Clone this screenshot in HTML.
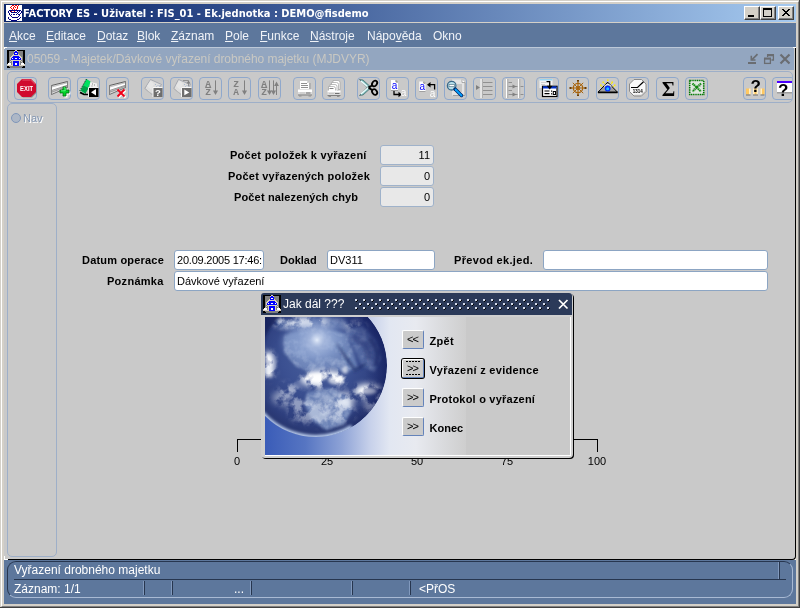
<!DOCTYPE html>
<html><head><meta charset="utf-8"><title>FACTORY ES</title>
<style>
html,body{margin:0;padding:0;}
body{will-change:transform;width:800px;height:608px;overflow:hidden;background:#d4d0c8;position:relative;font-family:"Liberation Sans",sans-serif;font-size:11px;color:#000;}
.abs{position:absolute;}
#frame{position:absolute;left:0;top:0;width:800px;height:608px;box-sizing:border-box;background:#d4d0c8;}
#fr1{position:absolute;left:0;top:0;width:799px;height:607px;border-right:1px solid #404040;border-bottom:1px solid #404040;}
#fr2{position:absolute;left:1px;top:1px;width:798px;height:606px;border-left:1px solid #fff;border-top:1px solid #fff;border-right:1px solid #808080;border-bottom:1px solid #808080;box-sizing:border-box;}
#title{position:absolute;left:4px;top:4px;width:792px;height:18px;background:linear-gradient(to right,#0a246a 0%,#0a246a 5%,#a6caf0 100%);}
#title .txt{position:absolute;left:19px;top:1.5px;line-height:16px;color:#fff;font-weight:bold;font-size:11px;font-family:"DejaVu Sans Condensed","Liberation Sans",sans-serif;white-space:nowrap;}
.cbtn{position:absolute;top:2px;width:16px;height:14px;background:#d4d0c8;box-sizing:border-box;border:1px solid;border-color:#fff #404040 #404040 #fff;box-shadow:inset -1px -1px 0 #808080;}
#menubar{position:absolute;left:4px;top:23px;width:792px;height:24px;background:#5d779c;}
#menubar span{position:absolute;top:6px;font-size:12px;line-height:14px;color:#f0f3f8;white-space:nowrap;}
#menubar u{text-decoration:underline;}
#mdi{position:absolute;left:4px;top:47px;width:792px;height:513px;box-sizing:border-box;background:#c9c9c9;border-right:1px solid #000;border-bottom:1px solid #000;border-bottom-right-radius:4px;border-top:1px solid #bcc8d8;}
#mdititle{position:absolute;left:4px;top:48px;width:790px;height:22px;background:#93a6c0;}
#mdititle .txt{position:absolute;left:23px;top:4px;letter-spacing:-.04px;font-size:12px;line-height:14px;color:#c9c8c2;white-space:nowrap;}
#status{position:absolute;left:4px;top:560px;width:792px;height:44px;background:#5d779c;}
.lbl{position:absolute;font-weight:bold;font-size:11px;line-height:13px;white-space:nowrap;}
.fld{position:absolute;box-sizing:border-box;border:1px solid #8ca5c3;border-radius:3px;background:#fff;font-size:11px;line-height:13px;white-space:nowrap;overflow:hidden;padding:3px 2px 0 2px;height:20px;}
.fld.ro{border-color:#9fb2ca;background:#e8e8e8;text-align:right;padding-right:3px;}
.tb{position:absolute;top:5px;}

#toolbar{position:absolute;left:7px;top:71px;width:786px;height:32px;box-sizing:border-box;border:1px solid #9eafc8;border-radius:5px;overflow:hidden;}
#toolbar .tb{top:5px;}
#navp{position:absolute;left:7px;top:103px;width:50px;height:454px;box-sizing:border-box;border:1px solid #9eafc8;border-radius:5px;}
#radio{position:absolute;left:3px;top:9px;width:10px;height:10px;box-sizing:border-box;border:1px solid #7f96ba;border-radius:50%;background:#adb7c6;}
#navt{position:absolute;left:15px;top:8px;font-size:11px;line-height:13px;color:#8397b4;text-shadow:1px 1px 0 #fff;}
.sl{position:absolute;top:455px;width:40px;text-align:center;font-size:11px;line-height:13px;}
#dlg{position:absolute;left:261px;top:293px;width:312px;height:165px;background:#cfcfcf;border-radius:4px 4px 4px 4px;box-shadow:1px 1px 0 #000;}
#dlgt{position:absolute;left:0;top:0;width:311px;height:22px;background:#2b3a59;border-radius:3px 3px 0 0;}
#dlgt .txt{position:absolute;left:22px;top:4px;font-size:12px;line-height:14px;color:#fff;white-space:nowrap;}
#dlgb{position:absolute;left:0;top:23px;width:312px;height:142px;}#dlgin{position:absolute;left:4px;top:1px;width:305px;height:138px;background:#c9c9c9;border-right:1px solid #fff;border-bottom:1px solid #fff;}

.dbtn{position:absolute;width:22px;height:19px;box-sizing:border-box;background:#cbcbcb;border:1px solid;border-color:#fff #6483ba #6483ba #fff;border-radius:2px;font-size:11px;line-height:13px;text-align:center;padding-top:2px;letter-spacing:-1px;text-indent:-1px;}
.dbtn.foc{box-shadow:0 0 0 1px #000;}.dbtn.foc i{position:absolute;left:3px;top:1px;width:14px;height:14px;box-sizing:border-box;background:repeating-linear-gradient(to right,#000 0,#000 2px,transparent 2px,transparent 3px) 0 0/14px 1px no-repeat,repeating-linear-gradient(to right,#000 0,#000 2px,transparent 2px,transparent 3px) 0 13px/14px 1px no-repeat;}
#stbox{position:absolute;left:3px;top:1px;width:786px;height:37px;box-sizing:border-box;border:1px solid;border-color:#27364f #a9bad4 #a9bad4 #27364f;border-radius:9px;}.vs{position:absolute;top:21px;width:1px;height:14px;background:#27364f;box-shadow:-1px 0 0 #8199bd;}
.st{position:absolute;font-size:12px;line-height:14px;color:#fff;white-space:nowrap;}
</style></head><body>
<div id="frame"><div id="fr1"></div><div id="fr2"></div></div>
<div id="title"><span class="txt">FACTORY ES - Uživatel : FIS_01 - Ek.jednotka : DEMO@fisdemo</span>
<div class="cbtn" style="left:740px"><svg width="16" height="14" style="position:absolute;left:-1px;top:-1px" shape-rendering="crispEdges"><rect x="4" y="9" width="6" height="2" fill="#000"/></svg></div>
<div class="cbtn" style="left:756px"><svg width="16" height="14" style="position:absolute;left:-1px;top:-1px" shape-rendering="crispEdges"><path d="M3 2h9v9h-9z M4 4v6h7v-6z" fill="#000" fill-rule="evenodd"/></svg></div>
<div class="cbtn" style="left:774px"><svg width="16" height="14" style="position:absolute;left:-1px;top:-1px" shape-rendering="crispEdges"><path d="M4 3h2v1h1v1h2v-1h1v-1h2v1h-1v1h-1v1h-1v1h1v1h1v1h1v1h-2v-1h-1v-1h-2v1h-1v1h-2v-1h1v-1h1v-1h1v-1h-1v-1h-1v-1h-1z" fill="#000"/></svg></div>
<svg id="appicon" width="16" height="16" style="position:absolute;left:2px;top:1px" shape-rendering="crispEdges"><rect width="16" height="16" fill="#fff"/>
<g fill="#ff0000"><rect x="6" y="0" width="2" height="1"/><rect x="9" y="0" width="2" height="1"/><rect x="12" y="0" width="1" height="1"/><rect x="5" y="1" width="1" height="1"/><rect x="8" y="1" width="1" height="1"/><rect x="11" y="1" width="1" height="2"/><rect x="4" y="2" width="1" height="1"/><rect x="7" y="2" width="1" height="2"/><rect x="9" y="2" width="1" height="1"/><rect x="5" y="3" width="1" height="1"/><rect x="11" y="3" width="1" height="1"/><rect x="6" y="4" width="1" height="1"/><rect x="8" y="4" width="1" height="1"/><rect x="10" y="4" width="1" height="1"/><rect x="5" y="6" width="1" height="1"/><rect x="8" y="6" width="1" height="1"/></g>
<g fill="#000080"><rect x="3" y="5" width="9" height="1"/><rect x="12" y="5" width="3" height="1"/><rect x="2" y="6" width="1" height="2"/><rect x="4" y="6" width="1" height="1"/><rect x="5" y="7" width="6" height="1"/><rect x="11" y="6" width="1" height="1"/><rect x="3" y="8" width="1" height="2"/><rect x="4" y="10" width="1" height="1"/><rect x="5" y="11" width="1" height="1"/><rect x="6" y="12" width="6" height="1"/><rect x="5" y="9" width="1" height="1"/><rect x="7" y="9" width="2" height="1"/><rect x="10" y="9" width="1" height="1"/><rect x="12" y="11" width="1" height="1"/><rect x="13" y="10" width="1" height="1"/><rect x="11" y="8" width="1" height="1"/><rect x="12" y="7" width="1" height="1"/><rect x="13" y="6" width="1" height="1"/><rect x="15" y="6" width="1" height="2"/><rect x="14" y="8" width="1" height="1"/><rect x="13" y="9" width="1" height="1"/><rect x="12" y="9" width="1" height="1"/><rect x="14" y="12" width="1" height="1"/><rect x="13" y="13" width="1" height="1"/><rect x="2" y="12" width="1" height="2"/><rect x="3" y="14" width="2" height="1"/><rect x="11" y="14" width="2" height="1"/><rect x="5" y="15" width="6" height="1"/></g></svg>
</div>
<div id="menubar">
<span style="left:5px"><u>A</u>kce</span><span style="left:42px"><u>E</u>ditace</span><span style="left:93px"><u>D</u>otaz</span><span style="left:133px"><u>B</u>lok</span><span style="left:167px"><u>Z</u>áznam</span><span style="left:221px"><u>P</u>ole</span><span style="left:256px"><u>F</u>unkce</span><span style="left:306px"><u>N</u>ástroje</span><span style="left:363px">Nápo<u>v</u>ěda</span><span style="left:429px">Okno</span>
</div>
<div id="mdi"></div>
<div id="mdititle"><svg class="pag" style="position:absolute;left:3px;top:2px" width="18" height="18" viewBox="0 0 18 18" shape-rendering="crispEdges"><rect width="18" height="18" fill="#000"/><rect x="2" y="1" width="14" height="16" fill="#808080"/>
<path d="M8 0h2v1h1v3h1v1h1v1h1v1h1v3h-1v1h1v1h1v1h1v1h1v2h-18v-2h1v-1h1v-1h1v-1h1v-1h-1v-3h1v-1h1v-1h1v-1h1v-3h1z" fill="#d8d0c0"/>
<path d="M8 1h2v1h1v3h-4v-3h1z M6 6h6v1h1v1h1v2h-10v-2h1v-1h1z M6 11h6v5h-6z" fill="#0000ff"/>
<rect x="8" y="3" width="2" height="1" fill="#fff"/><rect x="5" y="8" width="1" height="1" fill="#fff"/><rect x="8" y="8" width="2" height="1" fill="#fff"/><rect x="12" y="8" width="1" height="1" fill="#fff"/><rect x="8" y="13" width="2" height="2" fill="#fff"/>
<rect x="1" y="13" width="3" height="2" fill="#fff"/><rect x="14" y="13" width="3" height="2" fill="#fff"/><rect x="2" y="12" width="1" height="1" fill="#c0c0c0"/><rect x="15" y="12" width="1" height="1" fill="#c0c0c0"/>
<rect x="4" y="11" width="1" height="2" fill="#808080"/><rect x="3" y="12" width="1" height="1" fill="#808080"/><rect x="13" y="11" width="1" height="2" fill="#808080"/><rect x="14" y="12" width="1" height="1" fill="#808080"/><rect x="4" y="13" width="1" height="2" fill="#808080"/><rect x="13" y="13" width="1" height="2" fill="#808080"/><rect x="3" y="17" width="12" height="1" fill="#808080"/></svg><svg style="position:absolute;left:742px;top:5px" width="46" height="13" viewBox="0 0 46 13"><g stroke="#6a6d72" fill="none" stroke-width="2"><path d="M2 10h8"/><path d="M11.500 1.200 L5.800 6.900" stroke-width="1.700"/><path d="M5.300 2.800 V7 H9.500" stroke-width="1.600"/>
<path d="M21.600 4 V2.500 H27.400 V7 H25.500" stroke-width="1.300"/><path d="M21 2 H28" stroke-width="2"/><rect x="18.600" y="5.700" width="5.800" height="4.700" stroke-width="1.300"/><path d="M18 5.500 H25" stroke-width="2"/>
<path d="M34.500 1.500 L43.500 10.500 M43.500 1.500 L34.500 10.500" stroke-width="2.200"/></g></svg><span class="txt">05059 - Majetek/Dávkové vyřazení drobného majetku (MJDVYR)</span></div>

<div class="abs" style="left:4px;top:47px;width:3px;height:1px;background:#fff"></div><div class="abs" style="left:4px;top:47px;width:1px;height:2px;background:#fff"></div>
<div class="abs" style="left:4px;top:556px;width:1px;height:4px;background:#fff"></div><div class="abs" style="left:4px;top:559px;width:4px;height:1px;background:#fff"></div>
<div class="abs" style="left:793px;top:47px;width:3px;height:1px;background:#fff"></div><div class="abs" style="left:795px;top:559px;width:1px;height:1px;background:#fff"></div>
<div id="toolbar">
<svg class="tb" style="left:6px" width="23" height="23" viewBox="0 0 23 23"><rect x=".5" y=".5" width="22" height="22" rx="3.500" fill="none" stroke="#8fa8cc"/><path d="M8 2.5h9l4.5 4.5v8l-4.5 4.5h-9l-4.5-4.5v-8z" fill="#909090" transform="translate(1,1)"/>
<path d="M8 2h9l5 5v8l-5 5h-9l-5-5v-8z" fill="#d00a2e"/>
<path d="M8.3 3h8.4l4.3 4.3" stroke="#e8506a" fill="none"/>
<text x="12.6" y="13.6" font-family="Liberation Sans,sans-serif" font-weight="bold" font-size="7.2" fill="#fff" text-anchor="middle" textLength="13" lengthAdjust="spacingAndGlyphs">EXIT</text></svg>
<svg class="tb" style="left:40px" width="23" height="23" viewBox="0 0 23 23"><rect x=".5" y=".5" width="22" height="22" rx="3.500" fill="none" stroke="#8fa8cc"/><g>
<path d="M3.5 8.5 L19.5 4.5 V10.5 L3.5 17.5 Z" fill="#e4e4e4"/>
<path d="M4 10.5 L19 6.2 V8.2 L4 13 Z" fill="#fff"/>
<path d="M4 14.2 L19 8.8 V10 L4 15.8 Z" fill="#a0a0a0"/><path d="M4 9.8 L19 5.8" stroke="#c0c0c0" fill="none"/><path d="M4 13.4 L19 8.4" stroke="#808080" stroke-width=".8" fill="none"/>
<path d="M3.5 8.5 L19.5 4.5" stroke="#606060" fill="none"/>
<path d="M3.5 17.5 L19.5 10.5" stroke="#707070" fill="none"/>
<path d="M3.5 8 V18 M19.5 4 V11" stroke="#808080" fill="none"/>
</g><path d="M15.5 10.5h3v3h3v3h-3v3h-3v-3h-3v-3h3z" fill="#fff" transform="translate(1,1)"/>
<path d="M15 10h3v3h3v3h-3v3h-3v-3h-3v-3h3z" fill="#00d428" stroke="#006a10" stroke-width="0.8"/>
<path d="M15.6 10.8h1.6v3h-4.2" stroke="#70ff90" stroke-width="0.8" fill="none"/></svg>
<svg class="tb" style="left:69px" width="23" height="23" viewBox="0 0 23 23"><rect x=".5" y=".5" width="22" height="22" rx="3.500" fill="none" stroke="#8fa8cc"/><path d="M13 5 L20 6.5 V11 H13 Z" fill="#f0f0f0"/>
<path d="M15 7h1M17 8h1M14.5 9h1" stroke="#808080"/>
<path d="M9.5 2 L13.5 4.5 L11.500 11 L8 16.500 L3.500 13.500 Z" fill="#00e060"/>
<path d="M6.500 8.500 L11.500 11 L8.500 16.500 L4 13.500 Z" fill="#00a048"/>
<path d="M9.5 2 L3 13.5 L6 17 H9" stroke="#004020" stroke-width="1" fill="none" stroke-dasharray="1.5 1"/>
<path d="M3 15.5 L7 17.5 H11" stroke="#000" stroke-width="1.6" fill="none"/>
<rect x="11.5" y="10.5" width="10" height="9.5" fill="#000"/>
<path d="M11.5 20 V10.5 H21.5" stroke="#f4f4f4" fill="none"/>
<path d="M14 15.2 L19 12 V18.4 Z" fill="#fff"/></svg>
<svg class="tb" style="left:98px" width="23" height="23" viewBox="0 0 23 23"><rect x=".5" y=".5" width="22" height="22" rx="3.500" fill="none" stroke="#8fa8cc"/><g>
<path d="M3.5 8.5 L19.5 4.5 V10.5 L3.5 17.5 Z" fill="#e4e4e4"/>
<path d="M4 10.5 L19 6.2 V8.2 L4 13 Z" fill="#fff"/>
<path d="M4 14.2 L19 8.8 V10 L4 15.8 Z" fill="#a0a0a0"/><path d="M4 9.8 L19 5.8" stroke="#c0c0c0" fill="none"/><path d="M4 13.4 L19 8.4" stroke="#808080" stroke-width=".8" fill="none"/>
<path d="M3.5 8.5 L19.5 4.5" stroke="#606060" fill="none"/>
<path d="M3.5 17.5 L19.5 10.5" stroke="#707070" fill="none"/>
<path d="M3.5 8 V18 M19.5 4 V11" stroke="#808080" fill="none"/>
</g><path d="M11.5 12.5 L18.5 19.5 M18.5 12.5 L11.5 19.5" stroke="#fff" stroke-width="2" transform="translate(1,1)"/><path d="M11.5 12.5 L18.5 19.5 M18.5 12.5 L11.5 19.5" stroke="#f00018" stroke-width="1.900"/></svg>
<svg class="tb" style="left:133px" width="23" height="23" viewBox="0 0 23 23"><rect x=".5" y=".5" width="22" height="22" rx="3.500" fill="none" stroke="#8fa8cc"/><path d="M9.5 2.5 L20.5 7.5 L17 12 L11 17.5 L3.8 11.5 Z" fill="#dedede" stroke="#9a9ea8" stroke-width=".8"/>
<path d="M9.5 3.5 L6 9 L10 12.5 L13 7 Z" fill="#e6e6e6"/>
<path d="M14 7.5h1M16.5 8.5h1M15 9.8h1M18 9h1" stroke="#a8b8d0"/>
<path d="M3.8 11.5 L11 17.5" stroke="#b8b8b8" fill="none"/><rect x="12" y="10.5" width="9.5" height="9.5" fill="#6e6e6e"/><path d="M12 20 V10.5 H21.5" stroke="#f8f8f8" fill="none"/>
<text x="17" y="19" font-family="Liberation Sans,sans-serif" font-weight="bold" font-size="9.5" fill="#fff" text-anchor="middle">?</text></svg>
<svg class="tb" style="left:162px" width="23" height="23" viewBox="0 0 23 23"><rect x=".5" y=".5" width="22" height="22" rx="3.500" fill="none" stroke="#8fa8cc"/><path d="M8.5 2.5 L20.5 7.5 L17 12 L11 17.5 L3.8 11.5 Z" fill="#dedede" stroke="#9a9ea8" stroke-width=".8"/>
<path d="M9.5 3.5 L6 9 L10 12.5 L13 7 Z" fill="#e6e6e6"/>
<path d="M14 7.5h1M16.5 8.5h1M15 9.8h1M18 9h1" stroke="#a8b8d0"/>
<path d="M3.8 11.5 L11 17.5" stroke="#b8b8b8" fill="none"/><path d="M13 3.5 H18.5 V9" stroke="#909090" fill="none"/><path d="M16.5 6.5h4l-2 -3z" fill="#808080"/>
<rect x="11.5" y="10.5" width="10" height="9.5" fill="#6e6e6e"/><path d="M11.5 20 V10.5 H21.5" stroke="#f8f8f8" fill="none"/>
<path d="M14.3 12.5 L19.3 15.4 L14.3 18.3 Z" fill="#fff"/></svg>
<svg class="tb" style="left:191px" width="23" height="23" viewBox="0 0 23 23"><rect x=".5" y=".5" width="22" height="22" rx="3.500" fill="none" stroke="#8fa8cc"/><text x="9.2" y="9.8" font-family="Liberation Mono,monospace" font-weight="bold" font-size="9.5" fill="#808080" text-anchor="middle">A</text><text x="9.2" y="17.9" font-family="Liberation Mono,monospace" font-weight="bold" font-size="9.5" fill="#808080" text-anchor="middle">Z</text><path d="M6.2 10.5h6" stroke="#808080"/><path d="M16.5 3.4 V17" stroke="#808080" fill="none"/><path d="M14.0 13.6 h5 l-2.5 4.4z" fill="#808080"/></svg>
<svg class="tb" style="left:220px" width="23" height="23" viewBox="0 0 23 23"><rect x=".5" y=".5" width="22" height="22" rx="3.500" fill="none" stroke="#8fa8cc"/><text x="8.2" y="9.8" font-family="Liberation Mono,monospace" font-weight="bold" font-size="9.5" fill="#808080" text-anchor="middle">Z</text><text x="8.2" y="17.9" font-family="Liberation Mono,monospace" font-weight="bold" font-size="9.5" fill="#808080" text-anchor="middle">A</text><path d="M16.5 3.4 V17" stroke="#808080" fill="none"/><path d="M14.0 13.6 h5 l-2.5 4.4z" fill="#808080"/></svg>
<svg class="tb" style="left:250px" width="23" height="23" viewBox="0 0 23 23"><rect x=".5" y=".5" width="22" height="22" rx="3.500" fill="none" stroke="#8fa8cc"/><text x="6.2" y="9.8" font-family="Liberation Mono,monospace" font-weight="bold" font-size="9.5" fill="#808080" text-anchor="middle">A</text><text x="6.2" y="17.9" font-family="Liberation Mono,monospace" font-weight="bold" font-size="9.5" fill="#808080" text-anchor="middle">Z</text><path d="M3.2 10.5h6" stroke="#808080"/><path d="M11.5 3.4 V17" stroke="#808080" fill="none"/><path d="M9.0 13.6 h5 l-2.5 4.4z" fill="#808080"/><path d="M15.5 3.4 V17" stroke="#808080" fill="none"/><path d="M13.0 13.6 h5 l-2.5 4.4z" fill="#808080"/><path d="M18.5 6 V18" stroke="#808080" fill="none"/><path d="M16.1 9 h4.8 l-2.4 -4.4z" fill="#808080"/></svg>
<svg class="tb" style="left:285px" width="23" height="23" viewBox="0 0 23 23"><rect x=".5" y=".5" width="22" height="22" rx="3.500" fill="none" stroke="#8fa8cc"/><path d="M7 4h7l2 2v6h-9z" fill="#fff"/><path d="M14 4v2h2" fill="#d0d0d0"/><path d="M17 6v6" stroke="#909090" fill="none" stroke-width=".8"/>
<path d="M8 6.5h6M8 8.5h7M8 10.5h7" stroke="#909090"/>
<rect x="5" y="12.5" width="14" height="2.5" fill="#fff"/><rect x="5" y="15" width="14" height="2.5" fill="#dcdcdc"/>
<path d="M13 16h4.5" stroke="#707070"/><path d="M7 16h5" stroke="#c4c4c4"/>
<rect x="5" y="17.5" width="14" height="1" fill="#808080"/><rect x="6" y="18.5" width="2.5" height="1" fill="#909090"/><rect x="15.5" y="18.5" width="2.5" height="1" fill="#909090"/></svg>
<svg class="tb" style="left:314px" width="23" height="23" viewBox="0 0 23 23"><rect x=".5" y=".5" width="22" height="22" rx="3.500" fill="none" stroke="#8fa8cc"/><g fill="#fff" stroke="#a0a0a0" stroke-width=".7"><path d="M11 3.5h5q2 0 2 2v7h-7z"/><path d="M9.5 5.5h5q2 0 2 2v6h-7z"/><path d="M8 7.5h5q2 0 2 2v5h-7z"/><path d="M6.500 9.500h5q2 0 2 2v3h-7z"/></g>
<path d="M7.500 11.500h4" stroke="#808080"/>
<rect x="5.500" y="13.500" width="13" height="2" fill="#fff"/><rect x="5.500" y="15.500" width="13" height="2.500" fill="#dcdcdc"/>
<path d="M13 16.500h4.500" stroke="#707070"/><path d="M7 16.500h5" stroke="#c4c4c4"/>
<rect x="5.500" y="18" width="13" height="1" fill="#808080"/><rect x="6.500" y="19" width="2.500" height="1" fill="#909090"/><rect x="15" y="19" width="2.500" height="1" fill="#909090"/></svg>
<svg class="tb" style="left:349px" width="23" height="23" viewBox="0 0 23 23"><rect x=".5" y=".5" width="22" height="22" rx="3.500" fill="none" stroke="#8fa8cc"/><path d="M2.500 2.500 L6 3 L13.500 9.800 L11.500 12 Z" fill="#7ab8b8" stroke="#305858" stroke-width=".6"/><path d="M4 4 L11.500 10.600" stroke="#f0ffff" stroke-width="1.300"/>
<path d="M2.500 18.500 L6 18 L13.500 11.200 L11.500 9 Z" fill="#7ab8b8" stroke="#305858" stroke-width=".6"/><path d="M4 17 L11.500 10.400" stroke="#f0ffff" stroke-width="1.300"/>
<path d="M11.500 10.500 L15 8.500 M11.500 10.500 L15 13" stroke="#000" stroke-width="2"/>
<ellipse cx="17.600" cy="6.500" rx="2.300" ry="3" fill="none" stroke="#000" stroke-width="1.800" transform="rotate(35 17.600 6.500)"/>
<ellipse cx="17.600" cy="15" rx="2.300" ry="3" fill="none" stroke="#000" stroke-width="1.800" transform="rotate(-35 17.600 15)"/></svg>
<svg class="tb" style="left:378px" width="23" height="23" viewBox="0 0 23 23"><rect x=".5" y=".5" width="22" height="22" rx="3.500" fill="none" stroke="#8fa8cc"/><path d="M5 3h5l2 2v8.500h-7z" fill="#fff"/><path d="M10 3v2h2" fill="none" stroke="#606060" stroke-width=".8"/><path d="M5 13.500h7" stroke="#a0a0a0"/>
<text x="8.500" y="11.500" font-family="Liberation Sans,sans-serif" font-size="10" fill="#0000ff" text-anchor="middle">a</text>
<path d="M8 14 V17.500 H13" stroke="#000" stroke-width="1.300" fill="none"/><path d="M12.500 14.800 L15.800 17.500 L12.500 20.200 Z" fill="#000"/>
<text x="17.500" y="18.800" font-family="Liberation Sans,sans-serif" font-size="10" fill="#fff" text-anchor="middle">a</text></svg>
<svg class="tb" style="left:407px" width="23" height="23" viewBox="0 0 23 23"><rect x=".5" y=".5" width="22" height="22" rx="3.500" fill="none" stroke="#8fa8cc"/><path d="M4.300 4.500h4.500l1.700 1.700v8h-6.200z" fill="#fff"/><path d="M8.800 4.500v1.700h1.700" fill="none" stroke="#606060" stroke-width=".8"/><path d="M4.300 14.500h6.200" stroke="#a0a0a0"/>
<text x="7.400" y="12.800" font-family="Liberation Sans,sans-serif" font-size="10" fill="#0000ff" text-anchor="middle">a</text>
<path d="M19.600 12.500 V7.700 H15" stroke="#000" stroke-width="1.300" fill="none"/><path d="M15.500 5 L12 7.700 L15.500 10.400 Z" fill="#000"/>
<text x="17.500" y="20.200" font-family="Liberation Sans,sans-serif" font-size="10" fill="#fff" text-anchor="middle">a</text></svg>
<svg class="tb" style="left:436px" width="23" height="23" viewBox="0 0 23 23"><rect x=".5" y=".5" width="22" height="22" rx="3.500" fill="none" stroke="#8fa8cc"/><path d="M8 2.500h10l3 3v13h-13z" fill="#e4e4e4"/><path d="M18 2.500v3h3" fill="#fff" stroke="#909090" stroke-width=".7"/><rect x="13" y="7" width="5" height="8" fill="#c8c8c8"/><path d="M21 5.500v13h-12" stroke="#909090" fill="none" stroke-width=".8"/>
<circle cx="7.700" cy="8.700" r="4.300" fill="#b8e0ec" stroke="#3a6a8a" stroke-width="1.300"/><rect x="5" y="7.500" width="5.500" height="2.200" fill="#fff" stroke="#5a7a8a" stroke-width=".7"/>
<path d="M11 12 L17.500 18.500" stroke="#002060" stroke-width="3.400" stroke-linecap="round"/><path d="M11.500 12.500 L17.500 18.500" stroke="#00a0ff" stroke-width="1.800" stroke-linecap="round"/></svg>
<svg class="tb" style="left:465px" width="23" height="23" viewBox="0 0 23 23"><rect x=".5" y=".5" width="22" height="22" rx="3.500" fill="none" stroke="#8fa8cc"/><rect x="7.500" y="2" width="1.300" height="19" fill="#fff"/><rect x="8.800" y="2" width="1" height="19" fill="#a8a8a8"/>
<path d="M10 5.500h9.500M10 9.500h9.500M10 13.500h9.500M10 17.500h9.500" stroke="#909090"/><path d="M3 8 L7 10.500 L3 13 Z" fill="#808080"/></svg>
<svg class="tb" style="left:494px" width="23" height="23" viewBox="0 0 23 23"><rect x=".5" y=".5" width="22" height="22" rx="3.500" fill="none" stroke="#8fa8cc"/><rect x="4" y="2" width="1.300" height="19" fill="#fff"/><rect x="5.300" y="2" width="1" height="19" fill="#a8a8a8"/><rect x="16" y="2" width="1.300" height="19" fill="#fff"/><rect x="17.300" y="2" width="1" height="19" fill="#a8a8a8"/>
<path d="M6.500 5.500h3.500M6.500 9.500h9M6.500 13.500h3.500M6.500 17.500h9M18.500 9.500h3M18.500 17.500h3" stroke="#909090"/><path d="M10.500 7.500 L14.500 9.500 L10.500 11.500 Z M10.500 15.500 L14.500 17.500 L10.500 19.500 Z" fill="#808080"/></svg>
<svg class="tb" style="left:528px" width="23" height="23" viewBox="0 0 23 23"><rect x=".5" y=".5" width="22" height="22" rx="3.500" fill="none" stroke="#8fa8cc"/><rect x="3.500" y="2" width="13" height="9" fill="#f4f4f4"/><rect x="3.500" y="2" width="13" height="1.500" fill="#98d4f0"/><path d="M5 5.500h5M5 7.500h4" stroke="#d0d0d0"/>
<rect x="6.500" y="9.300" width="14.500" height="10.200" fill="#fff" stroke="#000" stroke-width="1.200"/><rect x="7" y="9.300" width="13.500" height="2.200" fill="#0030c8"/>
<path d="M10.500 4.700 H13.700 V10" stroke="#000" stroke-width="1.300" fill="none"/><path d="M10.800 8.800 h5.800 l-2.900 3.700z" fill="#000"/>
<path d="M8.500 14h5M8.500 16.700h5" stroke="#000" stroke-width="1.200"/><rect x="15" y="13.500" width="1.200" height="1.200" fill="#000"/><rect x="15" y="16.200" width="1.200" height="1.200" fill="#000"/><rect x="17.300" y="14.500" width="2.200" height="3" fill="none" stroke="#000" stroke-width="1"/></svg>
<svg class="tb" style="left:558px" width="23" height="23" viewBox="0 0 23 23"><rect x=".5" y=".5" width="22" height="22" rx="3.500" fill="none" stroke="#8fa8cc"/><g stroke="#a8640c" fill="none"><circle cx="12" cy="11" r="4.700" stroke-width="1.300"/><circle cx="12" cy="11" r="1.300" stroke-width="1.200"/>
<path d="M4 11 H20 M12 3.500 V18.500" stroke-width="1.200"/><path d="M6.800 5.800 L17.200 16.200 M17.200 5.800 L6.800 16.200" stroke-width="1"/></g>
<g fill="#6a3c04"><rect x="3.500" y="10" width="2" height="2"/><rect x="18.500" y="10" width="2" height="2"/><rect x="11" y="3" width="2" height="1.500"/><rect x="11" y="17.500" width="2" height="1.500"/></g></svg>
<svg class="tb" style="left:588px" width="23" height="23" viewBox="0 0 23 23"><rect x=".5" y=".5" width="22" height="22" rx="3.500" fill="none" stroke="#8fa8cc"/><path d="M11.700 5.200 L21.500 15.200 H2 Z" fill="#a0a0a0" stroke="#000" stroke-width="1" stroke-linejoin="miter"/><path d="M2 15.500 H21.500" stroke="#000" stroke-width="1.600"/>
<circle cx="11.700" cy="11.500" r="2.900" fill="#0030ff"/><circle cx="11.700" cy="11.700" r="1.500" fill="#20c0ff"/><path d="M8 9.500 Q11.700 5.500 15.400 9.500" stroke="#fff" stroke-width="1" fill="none"/>
<g fill="#ffee00"><rect x="11" y="2.500" width="1.500" height="1.500"/><rect x="6.500" y="4.500" width="1.500" height="1.500"/><rect x="8" y="6" width="1" height="1"/><rect x="15.500" y="4.500" width="1.500" height="1.500"/><rect x="15" y="6" width="1" height="1"/><rect x="4" y="7.500" width="1.500" height="1.500"/><rect x="18" y="7.500" width="1.500" height="1.500"/><rect x="17" y="9" width="1" height="1"/><rect x="5.500" y="9" width="1" height="1"/></g></svg>
<svg class="tb" style="left:618px" width="23" height="23" viewBox="0 0 23 23"><rect x=".5" y=".5" width="22" height="22" rx="3.500" fill="none" stroke="#8fa8cc"/><path d="M8 2.500h7.500l4.500 4.500v7.500l-4.500 4.500h-7.500l-4.500-4.500v-7.500z" fill="#f8f8f8" stroke="#8a8a8a" stroke-width="1"/><path d="M8.300 18.300h7l4-4" stroke="#b0b0b0" fill="none"/>
<path d="M5 10.500 H11.500 L17.500 4.800" stroke="#000" stroke-width="1.200" fill="none"/>
<text x="11.800" y="16.300" font-family="Liberation Sans,sans-serif" font-weight="bold" font-size="5.500" fill="#000" text-anchor="middle" textLength="10" lengthAdjust="spacingAndGlyphs">1314</text></svg>
<svg class="tb" style="left:648px" width="23" height="23" viewBox="0 0 23 23"><rect x=".5" y=".5" width="22" height="22" rx="3.500" fill="none" stroke="#8fa8cc"/><text x="12.500" y="18.800" font-family="Liberation Serif,serif" font-weight="bold" font-size="22" fill="#000" text-anchor="middle" textLength="13.5" lengthAdjust="spacingAndGlyphs">Σ</text></svg>
<svg class="tb" style="left:677px" width="23" height="23" viewBox="0 0 23 23"><rect x=".5" y=".5" width="22" height="22" rx="3.500" fill="none" stroke="#8fa8cc"/><rect x="4.700" y="3.500" width="14" height="14" fill="#e8e8e8" stroke="#007800" stroke-width="1.600" stroke-dasharray="1.200 .6"/><rect x="6.500" y="5.300" width="10.400" height="10.400" fill="#dde8dd"/>
<path d="M7.500 6.500 L16 14.500 M16 6.500 L7.500 14.500" stroke="#108a10" stroke-width="2.200" stroke-dasharray="1.400 .5"/><path d="M8 12h3M13 9h3" stroke="#909090" stroke-width=".8"/></svg>
<svg class="tb" style="left:735px" width="23" height="23" viewBox="0 0 23 23"><rect x=".5" y=".5" width="22" height="22" rx="3.500" fill="none" stroke="#8fa8cc"/><g><rect x="3" y="11.500" width="4.500" height="6" fill="#ffc860"/><rect x="10" y="11.500" width="5" height="6" fill="#ffc860"/><rect x="17.500" y="11.500" width="4" height="6" fill="#ffc860"/>
<rect x="6" y="11.500" width="1.500" height="6" fill="#fff0c8"/><rect x="10" y="11.500" width="1.500" height="6" fill="#fff0c8"/><rect x="13.500" y="11.500" width="1.500" height="6" fill="#fff0c8"/><rect x="17.500" y="11.500" width="1.500" height="6" fill="#fff0c8"/>
<path d="M3 18h4.500M10 18h5M17.500 18h4" stroke="#707070"/></g>
<text x="12.600" y="15.300" font-family="Liberation Sans,sans-serif" font-weight="bold" font-size="17" fill="#000" text-anchor="middle">?</text></svg>
<svg class="tb" style="left:764px" width="23" height="23" viewBox="0 0 23 23"><rect x=".5" y=".5" width="22" height="22" rx="3.500" fill="none" stroke="#8fa8cc"/><rect x="5" y="6" width="15" height="9.500" fill="#fff"/><rect x="5" y="4" width="15" height="2" fill="#4a00ff"/><path d="M5 15.800h15" stroke="#808080"/>
<text x="11.300" y="18.600" font-family="Liberation Sans,sans-serif" font-weight="bold" font-size="17" fill="#000" text-anchor="middle">?</text></svg>
</div><!--tbend-->
<div id="navp"><div id="radio"></div><span id="navt">Nav</span></div>
<div id="canvas">
<span class="lbl" style="left:230px;top:149px;letter-spacing:.27px">Počet položek k vyřazení</span>
<span class="lbl" style="left:228px;top:170px;letter-spacing:.21px">Počet vyřazených položek</span>
<span class="lbl" style="left:234px;top:191px;letter-spacing:.15px">Počet nalezených chyb</span>
<div class="fld ro" style="left:380px;top:145px;width:54px">11</div>
<div class="fld ro" style="left:380px;top:166px;width:54px">0</div>
<div class="fld ro" style="left:380px;top:187px;width:54px">0</div>
<span class="lbl" style="left:82px;top:254px;letter-spacing:.19px">Datum operace</span>
<span class="lbl" style="left:107px;top:275px;letter-spacing:.28px">Poznámka</span>
<span class="lbl" style="left:280px;top:254px;">Doklad</span>
<span class="lbl" style="left:454px;top:254px;letter-spacing:.32px">Převod ek.jed.</span>
<div class="fld" style="left:174px;top:250px;width:90px;letter-spacing:-.22px">20.09.2005 17:46:</div>
<div class="fld" style="left:327px;top:250px;width:108px">DV311</div>
<div class="fld" style="left:543px;top:250px;width:225px"></div>
<div class="fld" style="left:174px;top:271px;width:594px">Dávkové vyřazení</div>
<div id="scale">
<div class="abs" style="left:237px;top:439px;width:361px;height:1px;background:#000"></div>
<div class="abs" style="left:237px;top:439px;width:1px;height:13px;background:#000"></div>
<div class="abs" style="left:597px;top:439px;width:1px;height:13px;background:#000"></div>
<span class="sl" style="left:217px">0</span><span class="sl" style="left:307px">25</span><span class="sl" style="left:397px">50</span><span class="sl" style="left:487px">75</span><span class="sl" style="left:577px">100</span>
</div>
</div>
<div id="dlg">
<div id="dlgt"><svg class="pag" style="position:absolute;left:2px;top:2px" width="18" height="18" viewBox="0 0 18 18" shape-rendering="crispEdges"><rect width="18" height="18" fill="#000"/><rect x="2" y="1" width="14" height="16" fill="#808080"/>
<path d="M8 0h2v1h1v3h1v1h1v1h1v1h1v3h-1v1h1v1h1v1h1v1h1v2h-18v-2h1v-1h1v-1h1v-1h1v-1h-1v-3h1v-1h1v-1h1v-1h1v-3h1z" fill="#d8d0c0"/>
<path d="M8 1h2v1h1v3h-4v-3h1z M6 6h6v1h1v1h1v2h-10v-2h1v-1h1z M6 11h6v5h-6z" fill="#0000ff"/>
<rect x="8" y="3" width="2" height="1" fill="#fff"/><rect x="5" y="8" width="1" height="1" fill="#fff"/><rect x="8" y="8" width="2" height="1" fill="#fff"/><rect x="12" y="8" width="1" height="1" fill="#fff"/><rect x="8" y="13" width="2" height="2" fill="#fff"/>
<rect x="1" y="13" width="3" height="2" fill="#fff"/><rect x="14" y="13" width="3" height="2" fill="#fff"/><rect x="2" y="12" width="1" height="1" fill="#c0c0c0"/><rect x="15" y="12" width="1" height="1" fill="#c0c0c0"/>
<rect x="4" y="11" width="1" height="2" fill="#808080"/><rect x="3" y="12" width="1" height="1" fill="#808080"/><rect x="13" y="11" width="1" height="2" fill="#808080"/><rect x="14" y="12" width="1" height="1" fill="#808080"/><rect x="4" y="13" width="1" height="2" fill="#808080"/><rect x="13" y="13" width="1" height="2" fill="#808080"/><rect x="3" y="17" width="12" height="1" fill="#808080"/></svg><span class="txt">Jak dál ???</span><svg style="position:absolute;left:94px;top:6px" width="195" height="11" shape-rendering="crispEdges"><defs><pattern id="bump" width="8" height="8" patternUnits="userSpaceOnUse"><rect x="0" y="0" width="2" height="2" fill="#d4dcec"/><rect x="2" y="1" width="1" height="1" fill="#000"/><rect x="1" y="2" width="1" height="1" fill="#000"/><rect x="4" y="4" width="2" height="2" fill="#d4dcec"/><rect x="6" y="5" width="1" height="1" fill="#000"/><rect x="5" y="6" width="1" height="1" fill="#000"/></pattern></defs><rect width="195" height="11" fill="url(#bump)"/></svg>
<svg style="position:absolute;left:297px;top:6px" width="11" height="11"><path d="M1 1 L9.500 9.500 M9.500 1 L1 9.500" stroke="#fff" stroke-width="1.700" fill="none"/></svg></div>
<div id="dlgb"><div id="dlgin"></div>
<svg id="globe" width="201" height="138" viewBox="265 317 201 138" style="position:absolute;left:4px;top:1px">
<defs>
<linearGradient id="gbg" x1="265" x2="466" y1="0" y2="0" gradientUnits="userSpaceOnUse">
<stop offset="0" stop-color="#3a5cb8"/><stop offset=".2" stop-color="#5675c2"/><stop offset=".38" stop-color="#8da2d6"/><stop offset=".52" stop-color="#c6d0ea"/><stop offset=".62" stop-color="#e2e7f2"/><stop offset=".75" stop-color="#e8eaf0"/><stop offset=".88" stop-color="#dadbde"/><stop offset="1" stop-color="#cecece"/></linearGradient>
<radialGradient id="gsph" cx="315.600" cy="365.600" r="71.400" fx="320" fy="350" gradientUnits="userSpaceOnUse">
<stop offset="0" stop-color="#4c639f"/><stop offset=".5" stop-color="#3b5091"/><stop offset=".85" stop-color="#2e3f7e"/><stop offset="1" stop-color="#26346c"/></radialGradient>
<radialGradient id="ghl" cx="317" cy="340" r="34" gradientUnits="userSpaceOnUse">
<stop offset="0" stop-color="#e8f0fc" stop-opacity=".95"/><stop offset=".22" stop-color="#b8c8e8" stop-opacity=".62"/><stop offset=".6" stop-color="#8ca4d4" stop-opacity=".3"/><stop offset="1" stop-color="#8ca4d4" stop-opacity="0"/></radialGradient>
<radialGradient id="glimb" cx="304" cy="376" r="85" gradientUnits="userSpaceOnUse">
<stop offset=".72" stop-color="#101c60" stop-opacity="0"/><stop offset="1" stop-color="#101c60" stop-opacity=".6"/></radialGradient>
<clipPath id="gclip"><circle cx="315.600" cy="365.600" r="71.400"/></clipPath>
<filter id="gblur" x="-20%" y="-20%" width="140%" height="140%"><feGaussianBlur stdDeviation="1.600"/></filter>
<filter id="gblur2" x="-30%" y="-30%" width="160%" height="160%"><feGaussianBlur stdDeviation="3"/></filter>
<filter id="gcloud" x="0" y="0" width="100%" height="100%"><feTurbulence type="fractalNoise" baseFrequency=".09" numOctaves="4" seed="5" result="n"/><feColorMatrix in="n" type="matrix" values="0 0 0 0 .95  0 0 0 0 .97  0 0 0 0 1  0 0 0 4.5 -1.7"/></filter>
<filter id="gtex" x="0" y="0" width="100%" height="100%"><feTurbulence type="fractalNoise" baseFrequency=".12" numOctaves="3" seed="3" result="n"/><feColorMatrix in="n" type="matrix" values="0 0 0 0 .75  0 0 0 0 .82  0 0 0 0 .95  0 0 0 2.5 -1.0"/></filter>
<mask id="gmask" maskUnits="userSpaceOnUse" x="263" y="313" width="130" height="130"><g filter="url(#gblur2)" fill="#fff">
<ellipse cx="324" cy="379" rx="24" ry="9"/><ellipse cx="368" cy="391" rx="14" ry="7"/><ellipse cx="269" cy="365" rx="6" ry="14"/><ellipse cx="300" cy="322" rx="30" ry="5" opacity=".8"/><ellipse cx="345" cy="400" rx="10" ry="8" opacity=".7"/><ellipse cx="290" cy="388" rx="10" ry="4" opacity=".6"/><ellipse cx="355" cy="325" rx="12" ry="4" opacity=".6"/><ellipse cx="322" cy="412" rx="34" ry="13" opacity=".45"/><ellipse cx="288" cy="398" rx="16" ry="8" opacity=".45"/><ellipse cx="372" cy="405" rx="8" ry="10" opacity=".5"/></g></mask>
<mask id="lmask" maskUnits="userSpaceOnUse" x="263" y="313" width="130" height="130"><g filter="url(#gblur)" fill="#fff">
<path d="M284 336 Q300 328 330 330 L346 334 L352 350 L358 368 L346 372 L330 368 L310 372 L296 366 L284 352 Z"/>
<path d="M308 392 L330 388 L348 396 L352 410 L344 424 L326 430 L312 420 L304 404 Z"/>
<path d="M345 330 L362 326 L376 340 L381 358 L374 372 L362 366 L356 352 Z" opacity=".55"/>
<path d="M276 320 L345 318 L350 328 L300 330 L280 330 Z" opacity=".6"/></g></mask>
</defs>
<rect x="265" y="317" width="201" height="138" fill="url(#gbg)"/>
<g clip-path="url(#gclip)">
<circle cx="315.600" cy="365.600" r="71.400" fill="url(#gsph)"/>
<rect x="263" y="313" width="130" height="130" fill="#6b82b6" mask="url(#lmask)"/>
<rect x="263" y="313" width="130" height="130" filter="url(#gtex)" mask="url(#lmask)" opacity=".35"/>
<g filter="url(#gblur)"><path d="M336 343 L345 356 L355 370 L366 364" stroke="#22326e" stroke-width="3" fill="none" opacity=".85"/><path d="M370 338 L378 352 L376 366" stroke="#22326e" stroke-width="5" fill="none" opacity=".7"/><path d="M352 336 L366 346 L370 360" stroke="#263878" stroke-width="6" fill="none" opacity=".45"/></g>
<ellipse cx="312" cy="342" rx="30" ry="17" fill="#9fb6e0" opacity=".35" filter="url(#gblur2)"/><circle cx="317" cy="340" r="34" fill="url(#ghl)"/>
<rect x="263" y="313" width="130" height="130" filter="url(#gcloud)" mask="url(#gmask)"/>
<g filter="url(#gblur)" fill="#fff"><ellipse cx="316" cy="377" rx="11" ry="4" opacity=".8"/><ellipse cx="336" cy="380" rx="8" ry="4.500" opacity=".7"/><ellipse cx="368" cy="391" rx="9" ry="3.500" opacity=".65"/><ellipse cx="268" cy="360" rx="3" ry="6" opacity=".75"/><ellipse cx="270" cy="374" rx="3.500" ry="4" opacity=".6"/><ellipse cx="345" cy="370" rx="3" ry="4" opacity=".6"/></g>
<circle cx="315.600" cy="365.600" r="71.400" fill="url(#glimb)"/>
<path d="M263 315 H282 Q268 326 263 344 Z" fill="#18245c" filter="url(#gblur)" opacity=".9"/>
<path d="M262 413 A71.400 71.400 0 0 0 352 427" stroke="#bccff0" stroke-width="4.500" fill="none" opacity="1" filter="url(#gblur)"/>
</g>
</svg>
<div class="dbtn" style="left:141px;top:14px">&lt;&lt;</div>
<div class="dbtn foc" style="left:141px;top:43px"><i></i>&gt;&gt;</div>
<div class="dbtn" style="left:141px;top:72px">&gt;&gt;</div>
<div class="dbtn" style="left:141px;top:101px">&gt;&gt;</div>
<span class="lbl" style="left:168.500px;top:19px;letter-spacing:.3px">Zpět</span>
<span class="lbl" style="left:168.500px;top:48px;letter-spacing:.31px">Vyřazení z evidence</span>
<span class="lbl" style="left:168.500px;top:77px;letter-spacing:.22px">Protokol o vyřazení</span>
<span class="lbl" style="left:168.500px;top:106px">Konec</span>
</div>
</div>
<div id="status">
<div id="stbox"></div>
<div class="abs" style="left:10px;top:19px;width:772px;height:1px;background:#27364f"></div>
<div class="vs" style="left:775px;top:2px;height:17px"></div>
<div class="vs" style="left:140px"></div><div class="vs" style="left:168px"></div><div class="vs" style="left:247px"></div><div class="vs" style="left:348px"></div><div class="vs" style="left:406px"></div>
<span class="st" style="left:10px;top:3px">Vyřazení drobného majetku</span>
<span class="st" style="left:10px;top:22px">Záznam: 1/1</span>
<span class="st" style="left:230px;top:22px">...</span>
<span class="st" style="left:415px;top:22px">&lt;PřOS</span>
</div>
</body></html>
